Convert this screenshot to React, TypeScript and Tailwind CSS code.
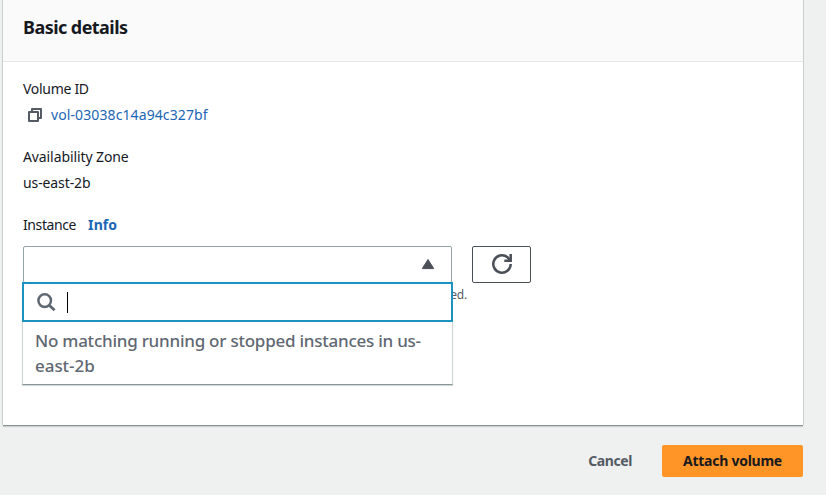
import React from "react";

function CopyIcon() {
  return (
    <svg width="14" height="14" viewBox="0 0 14 14" fill="none" stroke="#545b64" strokeWidth="2" strokeLinejoin="round">
      <path d="M1 4h9v9H1z" />
      <path d="M4 4V1H13v9H10" />
    </svg>
  );
}

function SearchIcon() {
  return (
    <svg width="20" height="20" viewBox="0 0 20 20" fill="none" stroke="#5f6872" strokeWidth="2.5">
      <circle cx="7.7" cy="8.6" r="6.3" />
      <path d="M12.2 13.2l5.4 5" strokeWidth="2.8" />
    </svg>
  );
}

function RefreshIcon() {
  return (
    <svg className="-mt-[2px]" width="20" height="20" viewBox="0 0 20 20" fill="none" stroke="#4a4f58" strokeWidth="2.5">
      <path d="M18.7 10A8.7 8.7 0 1 1 15.2 3L18 5.8" />
      <path d="M18.7 0V6.8H12.3" />
    </svg>
  );
}

export default function App() {
  return (
    <div className="flex h-[495px] w-[826px] flex-col overflow-hidden bg-[#eff1f1] pl-[3px] font-['Noto_Sans','Open_Sans',sans-serif] text-[14px] leading-[22px] text-[#16191f]">
      <section className="h-[425px] w-[800px] shrink-0 bg-white shadow-[0_1px_0_0_#8d9696,-1px_0_0_0_#c9cece,1px_0_0_0_#c9cece,0_2px_1px_0_#c9cece]">
        <header className="h-[62px] border-b border-[#e6e8e8] bg-[#fafafa] px-5 pt-4">
          <h2 className="w-max text-[18px] font-bold leading-[22px] tracking-[-0.55px]">Basic details</h2>
        </header>
        <div className="flex flex-col px-5 pt-4">
          <div className="w-max tracking-[-0.3px]">Volume ID</div>
          <div className="mt-1 flex items-center gap-[9px] pl-[5px] text-[#1b66b5]">
            <CopyIcon />
            <span className="tracking-[0.1px]">vol-03038c14a94c327bf</span>
          </div>
          <div className="mt-5 w-max tracking-[-0.1px]">Availability Zone</div>
          <div className="mt-1 w-max tracking-[-0.1px]">us-east-2b</div>
          <div className="mt-5 flex gap-3">
            <span className="tracking-[-0.4px]">Instance</span>
            <span className="font-bold tracking-[0.1px] text-[#1b66b5]">Info</span>
          </div>
          <div className="mt-[10px] flex gap-5">
            <div className="relative h-[37px] w-[429px] rounded-[2px] border border-[#95a5a6]">
              <div className="flex h-[35px] items-center justify-end pb-px pr-4">
                <svg width="14" height="12" viewBox="0 0 14 12" fill="#4a4f58" stroke="#4a4f58" strokeLinejoin="round">
                  <path d="M7 1.5L12.7 10.6H1.3z" />
                </svg>
              </div>
              <div className="absolute left-[-2px] top-[35px] z-10 w-[431px] bg-white">
                <div className="flex h-[40px] items-center border-2 border-[#1c93be] pl-[13px]">
                  <SearchIcon />
                  <span className="ml-[10px] h-[21px] w-px bg-black" />
                </div>
                <div className="h-[63px] border border-t-0 border-[#d0d6d6] border-b-[#879596] pl-3 pt-[6px] text-[17px] font-medium leading-[25px] text-[#5f6872] shadow-[0_1px_1px_0_#d5dbdb]">
                  <div className="w-max tracking-[-0.24px]">No matching running or stopped instances in us-</div>
                  <div className="w-max tracking-[-0.05px]">east-2b</div>
                </div>
              </div>
            </div>
            <button className="flex h-[37px] w-[59px] items-center justify-center rounded-[2px] border border-[#4a4f58]">
              <RefreshIcon />
            </button>
          </div>
          <p className="mt-[4px] w-[444px] whitespace-nowrap text-right text-[12px] leading-4 tracking-[-0.2px] text-[#545b64]">
            Only instances in the same Availability Zone are displayed.
          </p>
        </div>
      </section>
      <footer className="mt-5 flex h-8 w-[800px] shrink-0 items-center justify-end font-bold">
        <button className="mr-[30px] tracking-[-0.4px] text-[#545b64]">Cancel</button>
        <button className="flex h-8 w-[141px] items-center justify-center rounded-[2px] bg-[#ff9526]">
          <span className="tracking-[-0.25px]">Attach volume</span>
        </button>
      </footer>
    </div>
  );
}
